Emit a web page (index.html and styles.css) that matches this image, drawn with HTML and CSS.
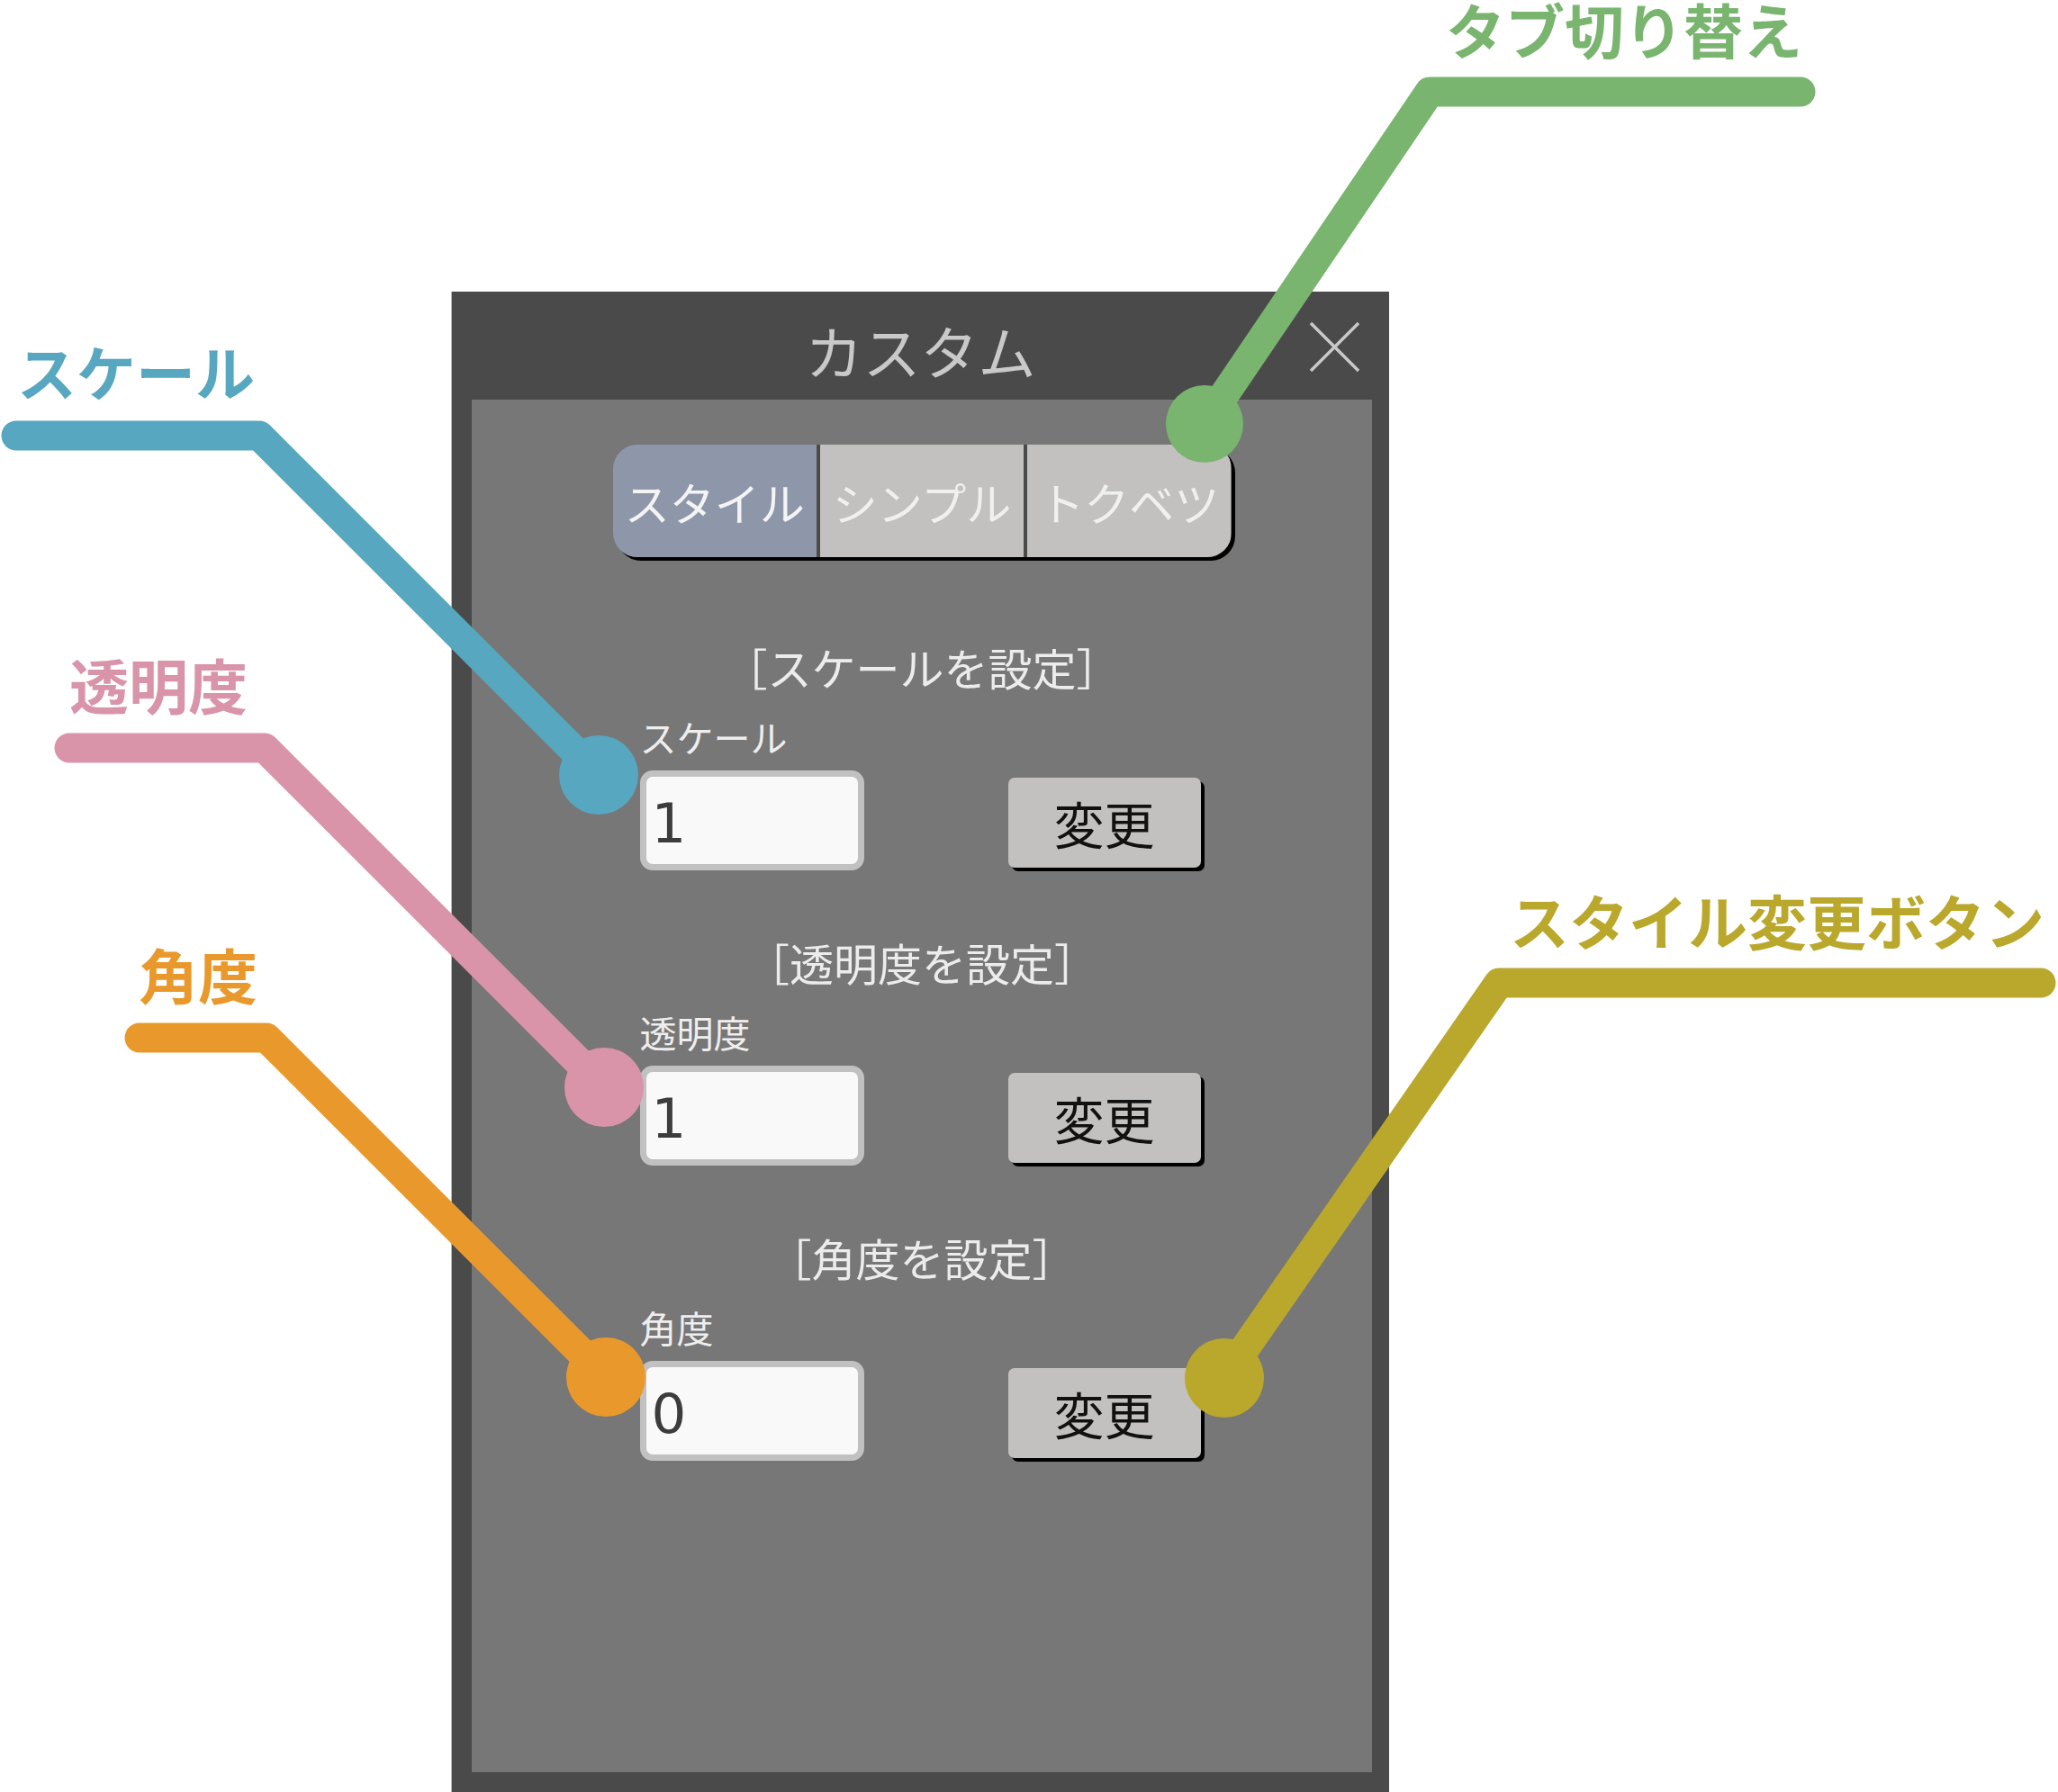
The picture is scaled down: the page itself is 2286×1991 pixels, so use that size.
FILE: index.html
```html
<!DOCTYPE html>
<html lang="ja">
<head>
<meta charset="utf-8">
<title>カスタム</title>
<link rel="stylesheet" href="styles.css">
</head>
<body>
<div class="page">
  <div class="window">
    <div class="titlebar">
      <span class="title">カスタム</span>
      <button class="close" aria-label="閉じる">
        <svg width="57" height="57" viewBox="0 0 57 57"><path d="M2 2L55 55M55 2L2 55"/></svg>
      </button>
    </div>
    <div class="panel">
      <div class="tabs">
        <div class="tab active">スタイル</div>
        <div class="tab">シンプル</div>
        <div class="tab">トクベツ</div>
      </div>
      <section class="group">
        <h2 class="group-title">［スケールを設定］</h2>
        <label class="field-label">スケール</label>
        <div class="row"><input class="field" value="1"><button class="btn">変更</button></div>
      </section>
      <section class="group">
        <h2 class="group-title">［透明度を設定］</h2>
        <label class="field-label">透明度</label>
        <div class="row"><input class="field" value="1"><button class="btn">変更</button></div>
      </section>
      <section class="group">
        <h2 class="group-title">［角度を設定］</h2>
        <label class="field-label">角度</label>
        <div class="row"><input class="field" value="0"><button class="btn">変更</button></div>
      </section>
    </div>
  </div>

  <svg class="callouts" width="2286" height="1991" viewBox="0 0 2286 1991">
    <g class="c-blue">
      <polyline points="18,484 288,484 665,861"/>
      <circle cx="665" cy="861" r="44"/>
      <text x="151" y="440">スケール</text>
    </g>
    <g class="c-pink">
      <polyline points="77,831 294,831 671,1208"/>
      <circle cx="671" cy="1208" r="44"/>
      <text x="176" y="788">透明度</text>
    </g>
    <g class="c-orange">
      <polyline points="155,1153 296,1153 673,1530"/>
      <circle cx="673" cy="1530" r="44"/>
      <text x="220" y="1110">角度</text>
    </g>
    <g class="c-green">
      <polyline points="2000,102 1588,102 1338,471"/>
      <circle cx="1338" cy="471" r="43"/>
      <text x="1804" y="60">タブ切り替え</text>
    </g>
    <g class="c-olive">
      <polyline points="2267,1092 1665,1092 1360,1531"/>
      <circle cx="1360" cy="1531" r="44"/>
      <text x="1974" y="1050">スタイル変更ボタン</text>
    </g>
  </svg>
</div>
</body>
</html>
```

FILE: styles.css
```css
html, body {
  margin: 0;
  padding: 0;
  background: #ffffff;
  overflow: hidden;
}

.page {
  position: relative;
  width: 2286px;
  height: 1991px;
  box-sizing: border-box;
  padding: 324px 0 0 502px;
  font-family: "Noto Sans CJK JP", "Noto Sans", sans-serif;
}

.window {
  width: 1041px;
  height: 1667px;
  background: #4a4a4a;
  display: flex;
  flex-direction: column;
  box-shadow: -1px 0 0 #b4b4b4;
}

.titlebar {
  height: 120px;
  flex: none;
  display: grid;
  grid-template-columns: 1fr auto 1fr;
}

.title {
  grid-column: 2;
  align-self: start;
  margin-top: 32px;
  font-size: 64px;
  line-height: 64px;
  color: #c9c9c9;
  font-weight: 400;
}

.close {
  grid-column: 3;
  justify-self: end;
  align-self: start;
  margin: 33px 32px 0 0;
  padding: 0;
  border: 0;
  background: none;
  width: 57px;
  height: 57px;
  display: block;
}

.close svg {
  display: block;
}

.close path {
  stroke: #c8c8c8;
  stroke-width: 3.5;
  fill: none;
}

.panel {
  flex: 1;
  margin: 0 19px 22px 22px;
  background: #777777;
  display: flex;
  flex-direction: column;
  align-items: center;
}

.tabs {
  margin-top: 50px;
  width: 687px;
  height: 125px;
  display: flex;
  border-radius: 27px;
  overflow: hidden;
  box-shadow: 4px 4px 0 #000000;
  flex: none;
}

.tab {
  flex: 1;
  display: flex;
  align-items: center;
  justify-content: center;
  background: #c2c1bf;
  color: #f0f0f0;
  font-size: 50px;
  line-height: 1;
}

.tab + .tab {
  border-left: 4px solid #4a4a4a;
}

.tab.active {
  background: #8e97aa;
  color: #f4f4f4;
}

.group {
  width: 627px;
  margin-top: 72px;
  flex: none;
}

.tabs + .group {
  margin-top: 92px;
}

.group-title {
  margin: 0;
  font-size: 49px;
  line-height: 60px;
  font-weight: 400;
  text-align: center;
  color: #ececec;
}

.field-label {
  display: block;
  margin-top: 22px;
  font-size: 41px;
  line-height: 50px;
  color: #eeeeee;
}

.row {
  margin-top: 13px;
  display: flex;
  justify-content: space-between;
  align-items: flex-start;
}

.field {
  width: 249px;
  height: 111px;
  box-sizing: border-box;
  border: 7px solid #c1c1c1;
  border-radius: 14px;
  background: #f9f9f9;
  padding: 6px 6px 0 6px;
  margin: 0;
  font-family: "DejaVu Sans", sans-serif;
  font-size: 61px;
  color: #3c3c3c;
  outline: none;
}

.btn {
  width: 214px;
  height: 100px;
  margin: 8px 4px 0 0;
  padding: 0;
  border: 0;
  border-radius: 7px;
  background: #c2c1bf;
  box-shadow: 4px 4px 0 #000000;
  font-family: "Noto Sans CJK JP", sans-serif;
  font-size: 56px;
  line-height: 1;
  color: #111111;
}

.callouts {
  position: absolute;
  left: 0;
  top: 0;
  pointer-events: none;
}

.callouts polyline {
  fill: none;
  stroke-width: 33;
  stroke-linecap: round;
  stroke-linejoin: round;
}

.callouts text {
  font-family: "Noto Sans CJK JP", sans-serif;
  font-weight: 700;
  font-size: 66px;
  text-anchor: middle;
}

.c-blue polyline { stroke: #57a7c0; }
.c-blue circle, .c-blue text { fill: #57a7c0; }
.c-pink polyline { stroke: #d994aa; }
.c-pink circle, .c-pink text { fill: #d994aa; }
.c-orange polyline { stroke: #e9992c; }
.c-orange circle, .c-orange text { fill: #e9992c; }
.c-green polyline { stroke: #79b56f; }
.c-green circle, .c-green text { fill: #79b56f; }
.c-olive polyline { stroke: #baa82d; }
.c-olive circle, .c-olive text { fill: #baa82d; }
```
